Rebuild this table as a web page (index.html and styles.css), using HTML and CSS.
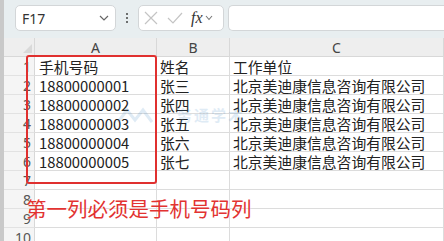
FILE: index.html
```html
<!DOCTYPE html>
<html lang="zh">
<head>
<meta charset="utf-8">
<link rel="stylesheet" href="styles.css">
</head>
<body>
<div class="app">
  <div class="strip"></div>
  <div class="main">
    <div class="toolbar">
      <div class="namebox">
        <span class="ref">F17</span>
        <svg class="chev" width="10" height="6" viewBox="0 0 10 6"><path d="M1 1l4 4 4-4" fill="none" stroke="#666" stroke-width="1.2"/></svg>
      </div>
      <div class="dots"><i></i><i></i><i></i></div>
      <div class="fxbox">
        <svg width="14" height="14" viewBox="0 0 14 14"><path d="M1 1l12 12M13 1L1 13" stroke="#c4c4c4" stroke-width="1.2"/></svg>
        <svg width="16" height="12" viewBox="0 0 16 12"><path d="M1 6l5 5 9-10" fill="none" stroke="#c4c4c4" stroke-width="1.2"/></svg>
        <span class="fx">fx</span>
        <svg class="chev" width="8" height="6" viewBox="0 0 8 6"><path d="M1 1l3 3.5 3-3.5" fill="none" stroke="#777" stroke-width="1.1"/></svg>
      </div>
      <div class="formula"></div>
    </div>
    <div class="sheet">
      <div class="corner"><span class="tri"></span></div>
      <div class="colhead">A</div>
      <div class="colhead">B</div>
      <div class="colhead">C</div>

      <div class="rowhead">1</div><div class="cell">手机号码</div><div class="cell">姓名</div><div class="cell">工作单位</div>
      <div class="rowhead">2</div><div class="cell">18800000001</div><div class="cell">张三</div><div class="cell">北京美迪康信息咨询有限公司</div>
      <div class="rowhead">3</div><div class="cell">18800000002</div><div class="cell">张四</div><div class="cell">北京美迪康信息咨询有限公司</div>
      <div class="rowhead">4</div><div class="cell">18800000003</div><div class="cell">张五</div><div class="cell">北京美迪康信息咨询有限公司</div>
      <div class="rowhead">5</div><div class="cell">18800000004</div><div class="cell">张六</div><div class="cell">北京美迪康信息咨询有限公司</div>
      <div class="rowhead">6</div><div class="cell">18800000005</div><div class="cell">张七</div><div class="cell">北京美迪康信息咨询有限公司</div>
      <div class="rowhead">7</div><div class="cell"></div><div class="cell"></div><div class="cell"></div>
      <div class="rowhead">8</div><div class="cell"></div><div class="cell"></div><div class="cell"></div>
      <div class="rowhead">9</div><div class="cell"></div><div class="cell"></div><div class="cell"></div>
      <div class="rowhead">10</div><div class="cell"></div><div class="cell"></div><div class="cell"></div>

      <div class="highlight"></div>
      <div class="note">第一列必须是手机号码列</div>
      <div class="watermark">
        <svg class="wm-logo" width="36" height="16" viewBox="0 0 36 16"><path d="M1 15L10 3l8 10 8-10 9 12" fill="none" stroke="#3d86c6" stroke-width="3"/></svg>
        <span class="wm-cn">务通学术</span>
      </div>
    </div>
  </div>
</div>
</body>
</html>
```

FILE: styles.css
```css
* { box-sizing: border-box; }
html, body {
  margin: 0;
  padding: 0;
  width: 444px;
  height: 241px;
  overflow: hidden;
  background: #ffffff;
  font-family: "Noto Sans CJK SC", "Noto Sans", sans-serif;
}
.app {
  display: flex;
  height: 241px;
}
.strip {
  width: 4px;
  flex: none;
  background: #c9c9c9;
}
.main {
  flex: 1;
  display: flex;
  flex-direction: column;
  min-width: 0;
}
.toolbar {
  height: 38px;
  flex: none;
  background: #e8eef0;
  display: flex;
  align-items: flex-start;
  padding: 5px 0 0 11px;
}
.namebox {
  width: 101px;
  height: 26px;
  background: #fff;
  border: 1px solid #d3d6d8;
  border-radius: 5px;
  display: flex;
  align-items: center;
  justify-content: space-between;
  padding: 0 6px 0 6px;
}
.ref {
  font-family: "Noto Sans", sans-serif;
  font-size: 14px;
  color: #333;
}
.dots {
  width: 22px;
  height: 26px;
  display: flex;
  flex-direction: column;
  align-items: center;
  justify-content: center;
  gap: 2px;
}
.dots i {
  width: 2px;
  height: 2px;
  background: #444;
  border-radius: 1px;
}
.fxbox {
  width: 86px;
  height: 26px;
  background: #fff;
  border: 1px solid #d3d6d8;
  border-radius: 5px;
  display: flex;
  align-items: center;
  padding: 0 4px 0 5px;
  gap: 9px;
}
.fxbox .fx {
  font-family: "Liberation Serif", "DejaVu Serif", serif;
  font-style: italic;
  font-size: 16px;
  color: #333;
  margin-left: -1px;
}
.fxbox .chev { margin-left: -7px; }
.formula {
  flex: 1;
  height: 26px;
  margin-left: 4px;
  background: #fff;
  border: 1px solid #d3d6d8;
  border-right: none;
  border-radius: 5px 0 0 5px;
}
.sheet {
  position: relative;
  display: grid;
  grid-template-columns: 31px 122px 73px 212px 2px;
  grid-auto-rows: 19px;
  font-size: 14.8px;
  color: #222;
}
.sheet > .colhead:nth-child(4) { grid-column: 4 / span 2; }
.corner {
  background: #eeeeee;
  border-right: 1px solid #d8d8d8;
  border-bottom: 1px solid #d8d8d8;
  position: relative;
}
.tri {
  position: absolute;
  right: 2px;
  bottom: 3px;
  width: 0;
  height: 0;
  border-left: 9px solid transparent;
  border-bottom: 9px solid #d9d9d9;
}
.colhead {
  background: #eeeeee;
  border-right: 1px solid #d8d8d8;
  border-bottom: 1px solid #d8d8d8;
  text-align: center;
  font-family: "Noto Sans", sans-serif;
  font-size: 14px;
  line-height: 19px;
  color: #444;
}
.rowhead {
  background: #f5f5f5;
  border-right: 1px solid #d8d8d8;
  border-bottom: 1px solid #e2e2e2;
  text-align: right;
  padding-right: 3px;
  font-family: "Noto Sans", sans-serif;
  font-size: 14px;
  line-height: 20px;
  color: #555;
}
.cell {
  border-right: 1px solid #dcdcdc;
  border-bottom: 1px solid #dcdcdc;
  padding-left: 3px;
  line-height: 20px;
  white-space: nowrap;
  overflow: hidden;
}
.sheet > .cell:nth-child(4n+2) { padding-left: 4px; }
.sheet > .cell:nth-child(4n) { grid-column: 4 / span 2; }
.highlight {
  position: absolute;
  left: 22px;
  top: 17px;
  width: 131px;
  height: 129px;
  border: 2px solid #e0302f;
  border-radius: 3px;
}
.note {
  position: absolute;
  left: 22px;
  top: 156px;
  font-size: 20.5px;
  line-height: 28px;
  color: #e23331;
  white-space: nowrap;
  text-shadow: 0 0 2px #fff;
}
.watermark {
  position: absolute;
  left: 113px;
  top: 69px;
  display: flex;
  align-items: center;
  gap: 24px;
  opacity: 0.16;
  pointer-events: none;
}
.wm-cn {
  font-size: 15px;
  font-weight: bold;
  color: #3d86c6;
  line-height: 16px;
  letter-spacing: 2px;
}
```
